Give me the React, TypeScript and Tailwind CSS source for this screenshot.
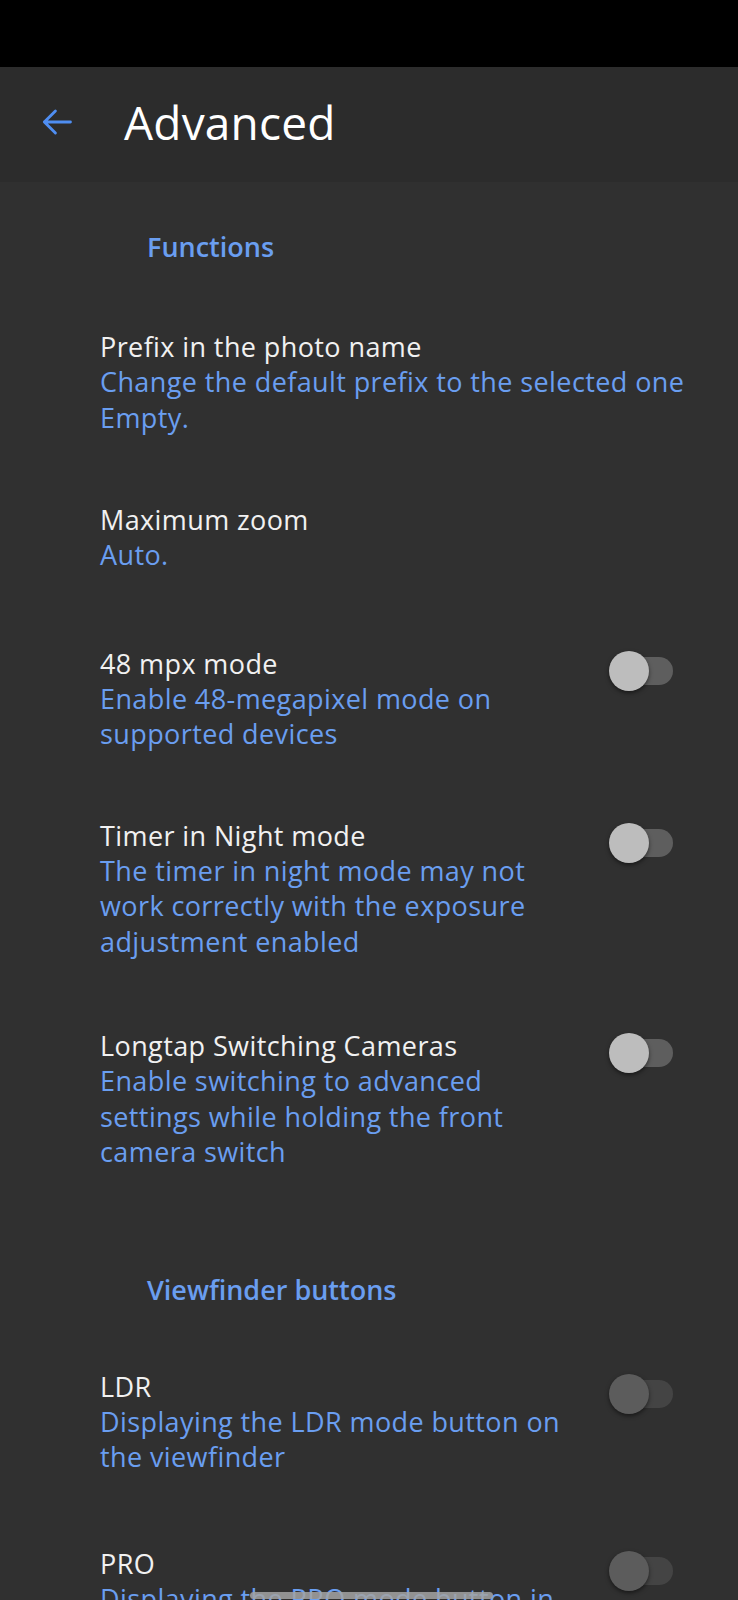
import React from "react";

const FONT = { fontFamily: '"Open Sans", "Noto Sans", Roboto, sans-serif' };

function Toggle({ disabled }: { disabled?: boolean }) {
  return (
    <div className="relative w-[64px] h-[40px] shrink-0">
      <div
        className={
          "absolute left-[16px] top-[6px] w-[48px] h-[28px] rounded-full " +
          (disabled ? "bg-[#444444]" : "bg-[#5e5e5e]")
        }
      />
      <div
        className={
          "absolute left-0 top-0 w-[40px] h-[40px] rounded-full shadow-[0_2px_4px_rgba(0,0,0,0.5)] " +
          (disabled ? "bg-[#5c5c5c]" : "bg-[#bdbdbd]")
        }
      />
    </div>
  );
}

function Item({
  title,
  lines,
  toggle,
  disabled,
  mt,
}: {
  title: string;
  lines: string[];
  toggle?: boolean;
  disabled?: boolean;
  mt: string;
}) {
  return (
    <div className={"flex items-start pl-[100px] pr-[65px] " + mt}>
      <div className="flex-1 min-w-0">
        <div className="text-[27px] leading-[35px] tracking-[0.4px] text-[#f1f1f1] whitespace-nowrap">{title}</div>
        {lines.map((l, i) => (
          <div key={i} className="text-[27px] leading-[35.5px] tracking-[0.4px] text-[#6a9ef0] whitespace-nowrap">
            {l}
          </div>
        ))}
      </div>
      {toggle && (
        <div className="mt-[5px]">
          <Toggle disabled={disabled} />
        </div>
      )}
    </div>
  );
}

export default function App() {
  return (
    <div className="relative w-full h-[1600px] overflow-hidden bg-[#303030]" style={FONT}>
      <div className="h-[67px] bg-black" />
      <div className="h-[115px] bg-[#2c2c2c] flex items-center">
        <div className="w-[124px] flex items-center justify-center pr-[10px] -mt-[6px]">
          <svg width="38" height="38" viewBox="0 0 24 24" fill="none">
            <path
              d="M20.5 12H4M11 5l-7 7 7 7"
              stroke="#4f8ef2"
              strokeWidth="1.8"
              strokeLinecap="round"
              strokeLinejoin="round"
            />
          </svg>
        </div>
        <div className="text-[46px] leading-[54px] text-white -mt-[6px] tracking-[0.2px]">Advanced</div>
      </div>

      <div className="pt-[47px] pl-[147px] text-[27px] leading-[35px] font-semibold text-[#6a9ef0]">
        Functions
      </div>

      <Item
        mt="mt-[65px]"
        title="Prefix in the photo name"
        lines={["Change the default prefix to the selected one", "Empty."]}
      />
      <Item mt="mt-[67px]" title="Maximum zoom" lines={["Auto."]} />
      <Item
        mt="mt-[73px]"
        title="48 mpx mode"
        lines={["Enable 48-megapixel mode on", "supported devices"]}
        toggle
      />
      <Item
        mt="mt-[66px]"
        title="Timer in Night mode"
        lines={["The timer in night mode may not", "work correctly with the exposure", "adjustment enabled"]}
        toggle
      />
      <Item
        mt="mt-[69px]"
        title="Longtap Switching Cameras"
        lines={["Enable switching to advanced", "settings while holding the front", "camera switch"]}
        toggle
      />

      <div className="mt-[102px] pl-[147px] text-[27px] leading-[35px] font-semibold text-[#6a9ef0]">
        Viewfinder buttons
      </div>

      <Item
        mt="mt-[62px]"
        title="LDR"
        lines={["Displaying the LDR mode button on", "the viewfinder"]}
        toggle
        disabled
      />
      <Item
        mt="mt-[71px]"
        title="PRO"
        lines={["Displaying the PRO mode button in", "the viewfinder"]}
        toggle
        disabled
      />

      <div className="absolute left-[250px] bottom-[1px] w-[243px] h-[7px] rounded-full bg-[#a3a3a3]/85" />
    </div>
  );
}
